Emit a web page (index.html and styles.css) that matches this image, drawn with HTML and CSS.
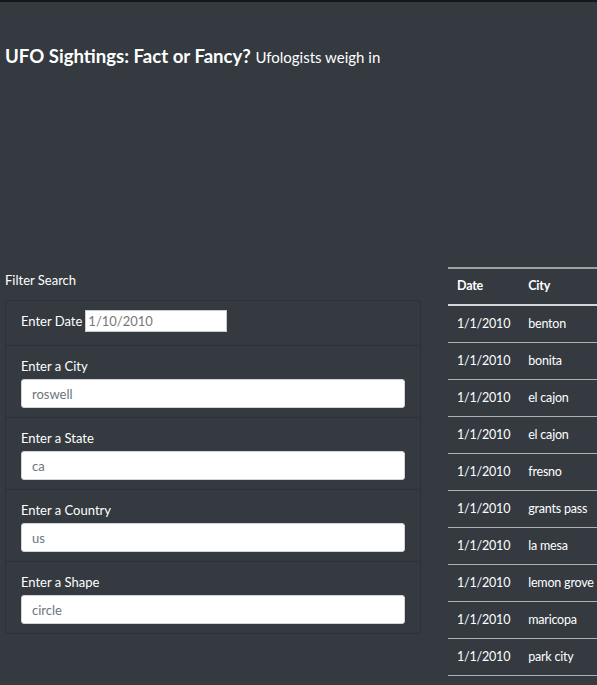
FILE: index.html
```html
<!DOCTYPE html>
<html lang="en">
<head>
<meta charset="utf-8">
<title>UFO Sightings</title>
<link rel="stylesheet" href="styles.css">
</head>
<body>
<div class="topbar"></div>
<header class="hero">
  <h1 class="title">UFO Sightings: Fact or Fancy? <small>Ufologists weigh in</small></h1>
</header>
<main class="content">
  <section class="filters">
    <div class="filters-label">Filter Search</div>
    <ul class="list">
      <li class="item item-date">
        <label for="datetime">Enter Date</label>
        <input id="datetime" class="date-input" type="text" placeholder="1/10/2010">
      </li>
      <li class="item">
        <label for="city">Enter a City</label>
        <input id="city" class="control" type="text" placeholder="roswell">
      </li>
      <li class="item">
        <label for="state">Enter a State</label>
        <input id="state" class="control" type="text" placeholder="ca">
      </li>
      <li class="item">
        <label for="country">Enter a Country</label>
        <input id="country" class="control" type="text" placeholder="us">
      </li>
      <li class="item">
        <label for="shape">Enter a Shape</label>
        <input id="shape" class="control" type="text" placeholder="circle">
      </li>
    </ul>
  </section>
  <section class="results">
    <table class="table">
      <thead>
        <tr><th class="c-date">Date</th><th>City</th></tr>
      </thead>
      <tbody>
        <tr><td class="c-date">1/1/2010</td><td>benton</td></tr>
        <tr><td class="c-date">1/1/2010</td><td>bonita</td></tr>
        <tr><td class="c-date">1/1/2010</td><td>el cajon</td></tr>
        <tr><td class="c-date">1/1/2010</td><td>el cajon</td></tr>
        <tr><td class="c-date">1/1/2010</td><td>fresno</td></tr>
        <tr><td class="c-date">1/1/2010</td><td>grants pass</td></tr>
        <tr><td class="c-date">1/1/2010</td><td>la mesa</td></tr>
        <tr><td class="c-date">1/1/2010</td><td>lemon grove</td></tr>
        <tr><td class="c-date">1/1/2010</td><td>maricopa</td></tr>
        <tr><td class="c-date">1/1/2010</td><td>park city</td></tr>
      </tbody>
    </table>
  </section>
</main>
</body>
</html>
```
FILE: styles.css
```css
* { box-sizing: border-box; }
html, body { margin: 0; padding: 0; }
body {
  background: #343a40;
  color: #fff;
  font-family: Lato, "Open Sans", sans-serif;
  font-size: 13px;
  line-height: 1.5;
  width: 597px;
  height: 685px;
  overflow: hidden;
}
.topbar {
  height: 2px;
  background: #14171b;
}
.hero {
  height: 265px;
  padding: 42px 5px 0;
}
.title {
  margin: 0;
  font-size: 18.6px;
  font-weight: 700;
  line-height: 1.3;
}
.title small {
  font-size: 15px;
  font-weight: 400;
}
.content {
  display: flex;
  gap: 27px;
  align-items: flex-start;
}
.filters {
  width: 421px;
  padding-left: 5px;
  padding-top: 3px;
  flex: none;
}
.filters-label {
  height: 30px;
  line-height: 20px;
}
.list {
  list-style: none;
  margin: 0;
  padding: 0;
  border: 1px solid rgba(0,0,0,0.14);
  border-radius: 4px;
}
.item {
  padding: 10px 15px 9px;
  border-top: 1px solid rgba(0,0,0,0.14);
  display: flex;
  flex-direction: column;
  gap: 3px;
}
.item:first-child { border-top: none; }
.item label { line-height: 20px; }
.item-date {
  flex-direction: row;
  align-items: center;
  gap: 3px;
  padding-top: 9px;
  padding-bottom: 13px;
}
.date-input {
  width: 142px;
  height: 22px;
  border: 1px solid #c8cbcf;
  background: #fff;
  font-family: inherit;
  font-size: 13px;
  padding: 0 2px;
}
.date-input::placeholder { color: #777; }
.control {
  width: 100%;
  height: 29px;
  border: 1px solid #ced4da;
  border-radius: 3px;
  background: #fff;
  padding: 0 10px;
  font-family: inherit;
  font-size: 13px;
}
.control::placeholder { color: #6c757d; }
.results {
  flex: 1;
  min-width: 0;
  overflow: hidden;
}
.table {
  border-collapse: collapse;
  width: 100%;
  white-space: nowrap;
  font-size: 12.5px;
  letter-spacing: -0.2px;
}
.table th, .table td {
  text-align: left;
  padding: 8px 9px 9px;
  line-height: 19px;
  border-top: 1px solid #aeb1b4;
}
.table th {
  font-weight: 700;
  border-top: 2px solid #9fa3a6;
  border-bottom: 2px solid #d4d6d8;
  padding-top: 7px;
}
.table .c-date { width: 72px; }
.table tbody tr:last-child td { border-bottom: 1px solid #aeb1b4; }
```
